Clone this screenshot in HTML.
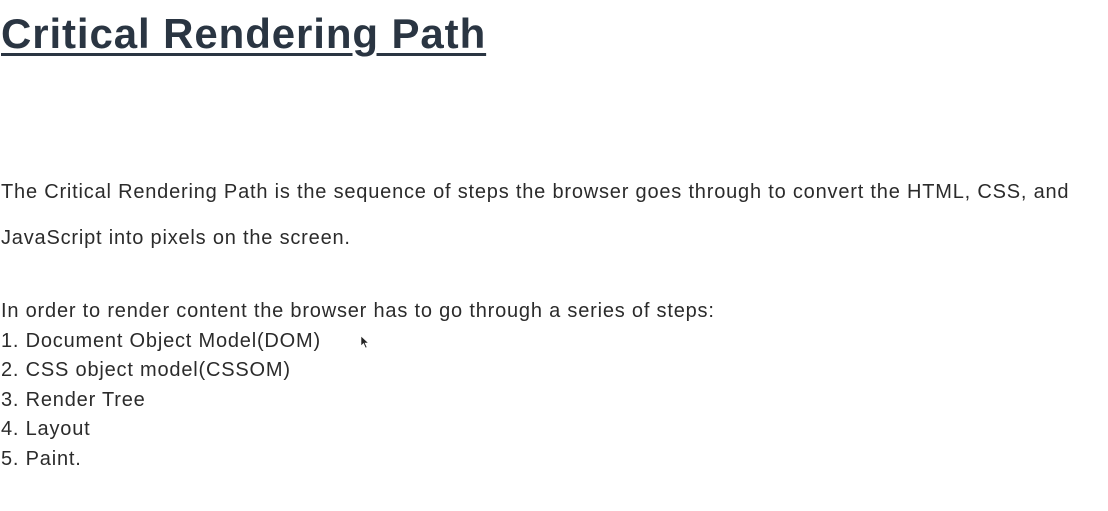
<!DOCTYPE html>
<html><head><style>
body{margin:0;width:1108px;height:511px;background:#fff;overflow:hidden;font-family:"Liberation Sans",sans-serif;color:#2b2b2b;}
h1{position:absolute;left:1px;top:10px;margin:0;font-size:42px;font-weight:bold;color:#2a3542;letter-spacing:0.9px;text-decoration:underline;text-decoration-thickness:3px;text-underline-offset:5px;white-space:nowrap;}
.p{position:absolute;left:1px;font-size:20px;letter-spacing:0.8px;white-space:nowrap;}
</style></head><body>
<h1>Critical Rendering Path</h1>
<div class="p" style="top:181px">The Critical Rendering Path is the sequence of steps the browser goes through to convert the HTML, CSS, and</div>
<div class="p" style="top:227px">JavaScript into pixels on the screen.</div>
<div class="p" style="top:297px;line-height:29.6px">In order to render content the browser has to go through a series of steps:<br>1. Document Object Model(DOM)<br>2. CSS object model(CSSOM)<br>3. Render Tree<br>4. Layout<br>5. Paint.</div>
<svg style="position:absolute;left:360px;top:335px" width="10" height="14" viewBox="0 0 10 14"><path d="M1 1 L1 11 L3.5 8.5 L5.5 13 L7 12.3 L5 8 L8.5 8 Z" fill="#222" stroke="#fff" stroke-width="0.6"/></svg>
</body></html>
